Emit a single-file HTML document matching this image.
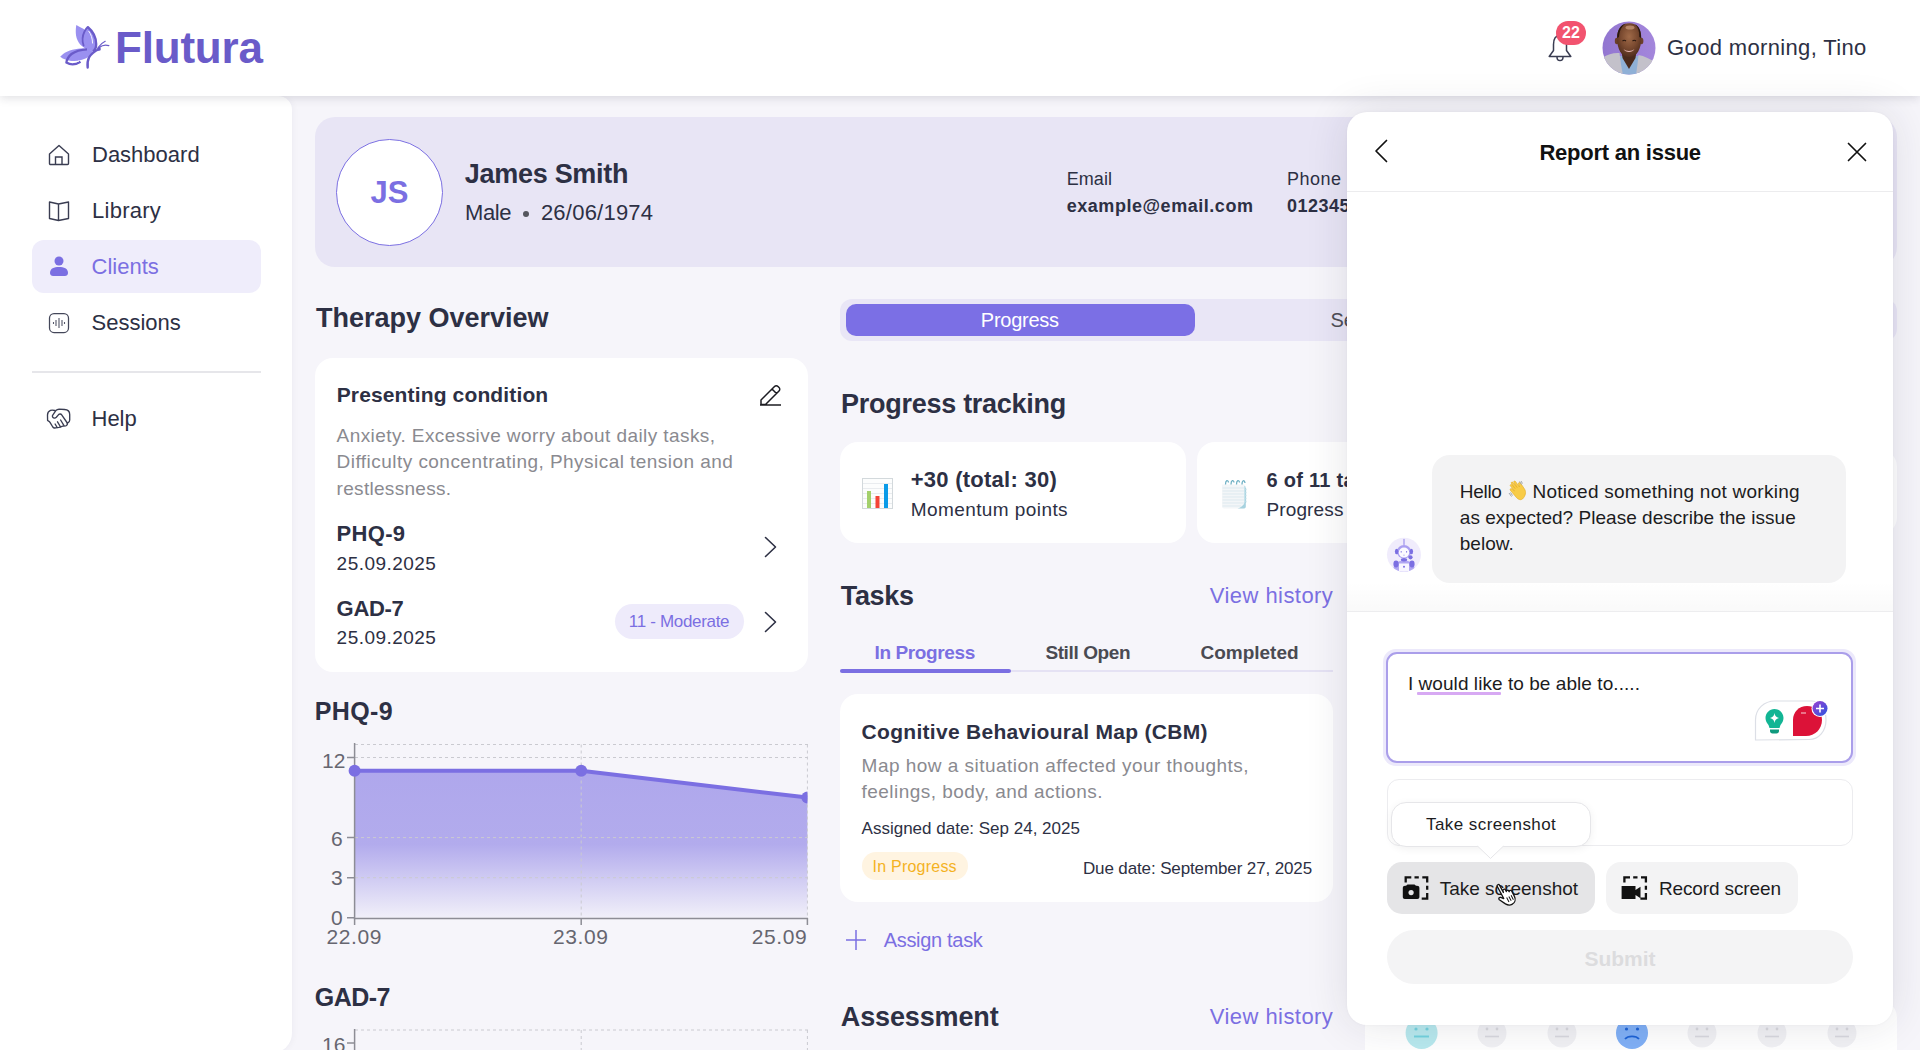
<!DOCTYPE html>
<html><head><meta charset="utf-8">
<style>
*{margin:0;padding:0;box-sizing:border-box}
html,body{width:1920px;height:1050px;overflow:hidden}
body{background:#f6f5fa;font-family:"Liberation Sans",sans-serif;color:#2d3044;position:relative}
.a{position:absolute}
.t{position:absolute;line-height:1;white-space:nowrap}
.b{font-weight:bold}
#hdr{left:0;top:0;width:1920px;height:96px;background:#fff;z-index:5;box-shadow:0 2px 9px rgba(40,40,60,.15)}
#side{left:0;top:96px;width:292px;height:957px;background:#fff;border-top-right-radius:14px;border-bottom-right-radius:20px;box-shadow:1px 0 7px rgba(30,30,60,.045);z-index:2}
.card{position:absolute;background:#fff;border-radius:18px}
.purple{color:#7b6fe2}
</style></head><body>

<!-- HEADER -->
<div id="hdr" class="a">
  <svg class="a" style="left:56px;top:20px" width="58" height="52" viewBox="56 20 58 52">
    <path d="M76.3 25 C80 27 83 28.5 85 30 L86 48.7 C80 46 76 40 75.8 33 C75.7 30 75.9 27 76.3 25 Z" fill="#9a90f0"/>
    <path d="M87.7 27 C92 31 95.5 38 95.5 44 C95.5 48 94 50 92 51 L86 49.5 C83 45 82 40 83 35 C84 31 86 29 87.7 27 Z" fill="#9a90f0"/>
    <path d="M83.6 45.5 C82 41 82.3 36 84.5 31.5 C85.5 29.5 86.5 28 87.7 27" fill="none" stroke="#6a5bc9" stroke-width="1.8" stroke-linecap="round"/><path d="M87.7 27 C92.5 31 96 37.5 96.2 44 C96.3 47.5 95 50 92.8 51.5" fill="none" stroke="#6a5bc9" stroke-width="2.3" stroke-linejoin="round"/>
    <path d="M88.6 31 C91 34 92.5 38.5 92.6 43.5" fill="none" stroke="#fff" stroke-width=".9"/>
    <path d="M60.2 56.7 C64 52.5 70 49.7 78 48.8 C82 48.5 85 48.5 87 49 L93 51 L90 56 C85 59.5 79 61 74 61 C68 61 63 59 60.2 56.7 Z" fill="#9a90f0"/>
    <path d="M87 49.3 C81 49.5 75.5 51 71.5 54 C68.5 56.5 66.8 59.5 66.4 62.6 C70 64.8 75.5 65 80.5 61.8" fill="none" stroke="#6a5bc9" stroke-width="2.3" stroke-linejoin="round"/>
    <path d="M69.5 61.3 C72.5 62.5 76 62.5 79 61" fill="none" stroke="#fff" stroke-width=".9"/>
    <path d="M99 49 C95 51 91 54 89 57.5 C87.5 60.5 87.3 64 87.7 67.5" fill="none" stroke="#6a5bc9" stroke-width="2.4" stroke-linecap="round"/>
    <circle cx="98.9" cy="48.9" r="1.9" fill="#6a5bc9"/>
    <path d="M98.3 47.3 C100.3 44.8 102.5 42.5 105.2 41.3" fill="none" stroke="#6a5bc9" stroke-width="1.2" stroke-linecap="round"/>
    <path d="M99.3 47.6 C102 45.2 105 44.4 108.8 45.6" fill="none" stroke="#6a5bc9" stroke-width="1.3" stroke-linecap="round"/>
  </svg>
  <div class="t b" style="left:115px;top:26px;font-size:44px;color:#6a5bc9;letter-spacing:-0.2px">Flutura</div>

  <!-- bell -->
  <svg class="a" style="left:1546px;top:30px" width="28" height="33" viewBox="0 0 28 33">
    <path d="M14 5.5 C9 5.5 7.5 10 7.5 14.5 L7.5 20.5 L3.2 26.5 L24.8 26.5 L20.5 20.5 L20.5 14.5 C20.5 10 19 5.5 14 5.5Z" fill="none" stroke="#3a3d52" stroke-width="1.5" stroke-linejoin="round"/>
    <path d="M11 27 C11 29.5 12.3 30.6 14 30.6 C15.7 30.6 17 29.5 17 27" fill="none" stroke="#3a3d52" stroke-width="1.5"/>
  </svg>
  <div class="a" style="left:1556px;top:21px;width:30px;height:24px;border-radius:12px;background:#f2536f"></div>
  <div class="t b" style="left:1556px;top:25px;width:30px;text-align:center;font-size:16px;color:#fff">22</div>

  <!-- avatar -->
  <svg class="a" style="left:1602px;top:21px" width="54" height="54" viewBox="0 0 54 54">
    <defs><clipPath id="cav"><circle cx="27" cy="27" r="26.5"/></clipPath>
    <linearGradient id="gbg" x1="0" y1="0" x2="1" y2="0"><stop offset="0" stop-color="#9276d0"/><stop offset="1" stop-color="#a487dc"/></linearGradient>
    <radialGradient id="gface" cx="50%" cy="40%" r="62%"><stop offset="0" stop-color="#a06a48"/><stop offset=".55" stop-color="#7a4a30"/><stop offset="1" stop-color="#4e2c1c"/></radialGradient></defs>
    <g clip-path="url(#cav)">
      <rect width="54" height="54" fill="url(#gbg)"/>
      <path d="M16 35 H38 V54 H16 Z" fill="#8fb0d6"/>
      <path d="M19.5 30 L34.5 30 L33.5 37 L27 48 L20.5 37 Z" fill="#4a2a1c"/>
      <path d="M0 37 C6 33 12 31.5 17.5 32 C18.5 40 19.5 47 21 54 L0 54 Z" fill="#c3c1ca"/>
      <path d="M36.5 34 C42 35 49 38 54 42 L54 54 L34 54 C35 47 36 40 36.5 34 Z" fill="#c3c1ca"/>
      <ellipse cx="14.8" cy="20" rx="2" ry="3.2" fill="#6b3f2a"/>
      <ellipse cx="39.4" cy="20" rx="2" ry="3.2" fill="#6b3f2a"/>
      <path d="M15 17 C15 8 20 2.2 27.5 2.2 C35 2.2 39.5 8 39.3 17 C39.3 28 35 36 27 36 C19.5 36 15 28 15 17 Z" fill="url(#gface)"/>
      <path d="M15.2 17 C15 9 19 3.5 24 2.6 C20 5 17.5 9 17 16 Z M39.1 17 C39.3 10 37 5 33 3.2 C36 6 37.5 10 37.3 16 Z" fill="#2a1810"/>
      <ellipse cx="28" cy="6.5" rx="4.5" ry="2" fill="#e0b090" opacity=".55"/>
      <path d="M20.5 20 C21.5 19.2 23 19.2 24 20 M30.5 20 C31.5 19.2 33 19.2 34 20" stroke="#2a1810" stroke-width="1.1" fill="none"/>
      <path d="M21.5 28 C24 30.5 30 30.5 32.5 28 C30.5 32 23.5 32 21.5 28 Z" fill="#e8b8b4"/>
    </g>
  </svg>
  <div class="t" style="left:1667.1px;top:37px;font-size:22px;color:#2d3044;letter-spacing:0.35px">Good morning, Tino</div>
</div>

<!-- SIDEBAR -->
<div id="side" class="a">
  <div class="a" style="left:32px;top:144px;width:229px;height:53px;border-radius:12px;background:#efedfb"></div>
  <div class="a" style="left:32px;top:275px;width:229px;height:2px;background:#e6e6ea"></div>
</div>
<div class="a" style="z-index:3;left:0;top:0">
  <!-- house -->
  <svg class="a" style="left:48px;top:144px" width="22" height="22" viewBox="0 0 22 22">
    <path d="M1.5 10 L11 1.5 L20.5 10 L20.5 19.5 C20.5 20 20 20.5 19.5 20.5 L2.5 20.5 C2 20.5 1.5 20 1.5 19.5Z" fill="none" stroke="#3a3d52" stroke-width="1.4" stroke-linejoin="round"/>
    <path d="M7.5 20.5 L7.5 13 L14 13 L14 20.5" fill="none" stroke="#3a3d52" stroke-width="1.4"/>
  </svg>
  <div class="t" style="left:92px;top:144px;font-size:22px;color:#2d3044">Dashboard</div>
  <!-- book -->
  <svg class="a" style="left:48px;top:200px" width="22" height="22" viewBox="0 0 22 22">
    <path d="M1.5 2 L10.5 4 L10.5 20.5 L1.5 18.5 Z M10.5 4 L20.5 2 L20.5 18.5 L10.5 20.5" fill="none" stroke="#3a3d52" stroke-width="1.4" stroke-linejoin="round"/>
  </svg>
  <div class="t" style="left:92px;top:200px;font-size:22px;color:#2d3044;letter-spacing:0.27px">Library</div>
  <!-- person -->
  <svg class="a" style="left:48px;top:255px" width="22" height="22" viewBox="0 0 22 22">
    <circle cx="11" cy="6" r="4.5" fill="#7b6fe2"/>
    <path d="M2 18 C2 13.5 6 12 11 12 C16 12 20 13.5 20 18 C20 20 18.5 21 17 21 L5 21 C3.5 21 2 20 2 18Z" fill="#7b6fe2"/>
  </svg>
  <div class="t" style="left:91.5px;top:256px;font-size:22px;color:#7b6fe2">Clients</div>
  <!-- sessions -->
  <svg class="a" style="left:48px;top:312px" width="22" height="22" viewBox="0 0 22 22">
    <rect x="1.5" y="1.5" width="19" height="19" rx="4.5" fill="none" stroke="#44475a" stroke-width="1.25"/>
    <path d="M5.5 10 V12 M8 8 V14 M11 6 V16 M14 8 V14 M16.5 10 V12" stroke="#55586a" stroke-width="1.1"/>
  </svg>
  <div class="t" style="left:91.5px;top:312px;font-size:22px;color:#2d3044">Sessions</div>
  <!-- help handshake -->
  <svg class="a" style="left:42px;top:402px" width="34" height="32" viewBox="42 402 34 32">
    <g fill="none" stroke="#3a3d52" stroke-width="1.35" stroke-linecap="round" stroke-linejoin="round">
      <path d="M54.8 410.5 C53 410 51.5 410 50.5 410.4 C48.5 411.3 47.5 413 47.5 415 L47.6 420.5 C48.5 421 49.5 421.5 50 422.3 L52.8 427 C53.5 428 54.5 428.2 55.5 427.9 L59 427.4 L62.8 426.2 L65.8 425.8 C67 425.4 67.6 424.2 67.3 423"/>
      <path d="M67.3 423 L68.2 422.6 C69.2 422 69.7 421 69.7 420 L69.7 414.5 C69.7 411.5 67.5 409.6 64.5 409.5 L59 409.2 C57.8 409.2 56.6 409.8 55.8 410.6 L52.6 415.3 C52.1 416.3 52.6 417.5 53.6 417.9 C54.6 418.3 55.6 418 56.3 417.3 L58.6 414.6 C59.5 413.7 61 413.8 61.7 414.8 L67.3 423"/>
      <path d="M60.6 420 L64 425.6 M57.5 421.8 L60.6 427 M55.1 424 L57.2 427.5"/>
    </g>
  </svg>
  <div class="t" style="left:91.5px;top:408px;font-size:22px;color:#2d3044">Help</div>
</div>

<!-- MAIN -->
<div id="main" class="a" style="left:0;top:0;width:1920px;height:1050px;z-index:1">
  <!-- patient card -->
  <div class="a" style="left:315px;top:117px;width:1582px;height:150px;border-radius:20px;background:#e8e5f5"></div>
  <div class="a" style="left:336px;top:139px;width:107px;height:107px;border-radius:50%;background:#fff;border:1.5px solid #7b6fe2"></div>
  <div class="t b" style="left:336px;top:177px;width:107px;text-align:center;font-size:31px;color:#7b6fe2">JS</div>
  <div class="t b" style="left:464.8px;top:161px;font-size:27px;color:#2d3044;letter-spacing:-0.29px">James Smith</div>
  <div class="t" style="left:465.0px;top:202px;font-size:22px;color:#2d3044;letter-spacing:-0.37px">Male</div>
  <div class="a" style="left:523px;top:211px;width:6px;height:6px;border-radius:50%;background:#55565e"></div>
  <div class="t" style="left:540.9px;top:202px;font-size:22px;color:#2d3044;letter-spacing:0.23px">26/06/1974</div>
  <div class="t" style="left:1066.7px;top:170px;font-size:18px;color:#2d3044;letter-spacing:0.07px">Email</div>
  <div class="t b" style="left:1066.7px;top:197px;font-size:18px;color:#2d3044;letter-spacing:0.54px">example@email.com</div>
  <div class="t" style="left:1287.0px;top:170px;font-size:18px;color:#2d3044;letter-spacing:0.50px">Phone</div>
  <div class="t b" style="left:1287.0px;top:197px;font-size:18px;color:#2d3044;letter-spacing:0.5px">0123456789</div>

  <!-- LEFT COLUMN -->
  <div class="t b" style="left:315.9px;top:305px;font-size:27px;color:#2d3044">Therapy Overview</div>
  <div class="card" style="left:315px;top:358px;width:493px;height:314px"></div>
  <div class="t b" style="left:336.7px;top:384px;font-size:21px;color:#2d3044;letter-spacing:0.14px">Presenting condition</div>
  <svg class="a" style="left:758px;top:381.5px" width="25" height="25" viewBox="0 0 25 25">
    <path d="M3 22.5 L3 18 L16.5 4.5 C17.5 3.5 19 3.5 20 4.5 L21 5.5 C22 6.5 22 8 21 9 L7.5 22.5 Z M14 7 L18.5 11.5 M2 23 L23 23" fill="none" stroke="#1c1c22" stroke-width="1.5" stroke-linejoin="round"/>
  </svg>
  <div class="t" style="left:336.6px;top:426px;font-size:19px;color:#8a8a90;letter-spacing:0.42px">Anxiety. Excessive worry about daily tasks,</div>
  <div class="t" style="left:336.6px;top:452px;font-size:19px;color:#8a8a90;letter-spacing:0.46px">Difficulty concentrating, Physical tension and</div>
  <div class="t" style="left:336.6px;top:479px;font-size:19px;color:#8a8a90;letter-spacing:0.30px">restlessness.</div>
  <div class="t b" style="left:336.6px;top:523px;font-size:22px;color:#2d3044;letter-spacing:0.32px">PHQ-9</div>
  <div class="t" style="left:336.6px;top:554px;font-size:19px;color:#2d3044;letter-spacing:0.47px">25.09.2025</div>
  <div class="t b" style="left:336.6px;top:598px;font-size:22px;color:#2d3044;letter-spacing:-0.30px">GAD-7</div>
  <div class="t" style="left:336.6px;top:628px;font-size:19px;color:#2d3044;letter-spacing:0.47px">25.09.2025</div>
  <div class="a" style="left:615px;top:604px;width:129px;height:35px;border-radius:18px;background:#eeebfb"></div>
  <div class="t" style="left:628.8px;top:613px;font-size:17px;color:#7b6fe2;letter-spacing:-0.32px">11 - Moderate</div>
  <svg class="a" style="left:760px;top:535px" width="20" height="24" viewBox="0 0 20 24">
    <path d="M5.5 2.5 L15.5 12 L5.5 21.5" fill="none" stroke="#2d3044" stroke-width="1.6" stroke-linecap="round" stroke-linejoin="round"/>
  </svg>
  <svg class="a" style="left:760px;top:610px" width="20" height="24" viewBox="0 0 20 24">
    <path d="M5.5 2.5 L15.5 12 L5.5 21.5" fill="none" stroke="#2d3044" stroke-width="1.6" stroke-linecap="round" stroke-linejoin="round"/>
  </svg>

  <div class="t b" style="left:314.8px;top:699px;font-size:25px;color:#2d3044;letter-spacing:0.38px">PHQ-9</div>
  <svg class="a" style="left:0;top:0" width="830" height="1050" viewBox="0 0 830 1050">
    <defs><linearGradient id="area" x1="0" y1="0" x2="0" y2="1">
      <stop offset="0" stop-color="#7b6fe2" stop-opacity=".58"/>
      <stop offset=".5" stop-color="#7b6fe2" stop-opacity=".55"/>
      <stop offset="1" stop-color="#7b6fe2" stop-opacity=".04"/>
    </linearGradient></defs>
    <path d="M354.6 770.8 L581.2 770.8 L807.4 797.6 L807.4 917.8 L354.6 917.8 Z" fill="url(#area)"/>
    <g stroke="#cacad0" stroke-width="1" stroke-dasharray="3 3" fill="none">
      <path d="M355 744.5 H808 M355 757.5 H808 M355 837.6 H808 M355 877.7 H808"/>
      <path d="M581.2 744.5 V918 M807.4 744.5 V918"/>
    </g>
    <path d="M354.6 743 V918.5 H808" fill="none" stroke="#8d8d95" stroke-width="1.5"/>
    <path d="M347 757.5 H354 M347 837.6 H354 M347 877.7 H354 M347 917.8 H354 M354.6 918 V925 M581.2 918 V925 M807.4 918 V925" stroke="#8d8d95" stroke-width="1.5"/>
    <path d="M354.6 770.8 L581.2 770.8 L807.4 797.6" fill="none" stroke="#7b6fe2" stroke-width="4" stroke-linejoin="round" stroke-linecap="butt"/>
    <circle cx="354.6" cy="770.8" r="6" fill="#7b6fe2"/>
    <circle cx="581.2" cy="770.8" r="6" fill="#7b6fe2"/>
    <path d="M807.4 791.6 A6 6 0 0 0 807.4 803.6 Z" fill="#7b6fe2"/>
    <g stroke="#cacad0" stroke-width="1" stroke-dasharray="3 3" fill="none">
      <path d="M355 1030 H808 M581.2 1030 V1050 M807.4 1030 V1050"/>
    </g>
    <path d="M354.6 1029 V1050 M347 1043 H354" fill="none" stroke="#8d8d95" stroke-width="1.5"/>
  </svg>
  <div class="t" style="left:322px;top:750px;font-size:21px;color:#666670">12</div>
  <div class="t" style="left:331px;top:828px;font-size:21px;color:#666670">6</div>
  <div class="t" style="left:331px;top:867px;font-size:21px;color:#666670">3</div>
  <div class="t" style="left:331px;top:907px;font-size:21px;color:#666670">0</div>
  <div class="t" style="left:326.4px;top:926px;font-size:21px;color:#666670;letter-spacing:0.6px">22.09</div>
  <div class="t" style="left:553px;top:926px;font-size:21px;color:#666670;letter-spacing:0.6px">23.09</div>
  <div class="t" style="left:751.7px;top:926px;font-size:21px;color:#666670;letter-spacing:0.6px">25.09</div>
  <div class="t b" style="left:314.8px;top:985px;font-size:25px;color:#2d3044;letter-spacing:-0.55px">GAD-7</div>
  <div class="t" style="left:322px;top:1034px;font-size:21px;color:#666670">16</div>

  <!-- MIDDLE COLUMN -->
  <div class="a" style="left:840px;top:299px;width:1057px;height:42px;border-radius:12px;background:#e9e6f6"></div>
  <div class="a" style="left:846px;top:304px;width:349px;height:32px;border-radius:10px;background:#7b6fe5"></div>
  <div class="t" style="left:980.8px;top:310px;font-size:20px;color:#ffffff;letter-spacing:-0.26px">Progress</div>
  <div class="t" style="left:1330.4px;top:310px;font-size:20px;color:#4e4e56">Sessions</div>
  <div class="t b" style="left:841.0px;top:391px;font-size:27px;color:#2d3044;letter-spacing:-0.27px">Progress tracking</div>
  <div class="card" style="left:840px;top:442px;width:346px;height:101px"></div>
  <div class="card" style="left:1197px;top:442px;width:346px;height:101px"></div>
  <div class="card" style="left:1554px;top:449px;width:343px;height:86px"></div>
  <svg class="a" style="left:862px;top:478px" width="32" height="31" viewBox="0 0 32 31">
    <rect x=".5" y=".5" width="30" height="30" fill="#fcfdfd" stroke="#d3d9dc"/>
    <path d="M1 5.5 H30 M1 10.5 H30 M1 15.5 H30 M1 20.5 H30 M1 25.5 H30" stroke="#e9ecef" stroke-width="1"/>
    <rect x="5" y="13" width="4" height="17" fill="#a3d06c"/>
    <rect x="13.5" y="18" width="4" height="12" fill="#f44336"/>
    <rect x="22" y="6" width="4" height="24" fill="#0a9be8"/>
  </svg>
  <div class="t b" style="left:910.7px;top:469px;font-size:22px;color:#2d3044;letter-spacing:0.26px">+30 (total: 30)</div>
  <div class="t" style="left:910.7px;top:500px;font-size:19px;color:#2d3044;letter-spacing:0.42px">Momentum points</div>
  <svg class="a" style="left:1221px;top:478px" width="27" height="32" viewBox="0 0 27 32">
    <path d="M1 6.5 H23.5 V30.5 H3 C2 30.5 1 29.5 1 28.5 Z" fill="#f3f6f8"/>
    <path d="M1.5 10 H23 M1.5 13 H23 M1.5 16 H23 M1.5 19 H23 M1.5 22 H23 M1.5 25 H23 M1.5 28 H20" stroke="#dde9ef" stroke-width="1"/>
    <path d="M23 7.5 C24.5 8 25 9 25 10 V28.5 C25 29.7 24 30.5 23 30.5 Z" fill="#c6e3ec"/>
    <path d="M24.5 10 L25 11.5 L24.5 13 L25 14.5 L24.5 16 L25 17.5 L24.5 19 L25 20.5 L24.5 22 L25 23.5 L24.5 25" fill="none" stroke="#9ccbda" stroke-width=".7"/>
    <path d="M16.5 30.5 C19.5 30 22.5 27.5 24.5 23.5 L24.5 28.5 C24.5 29.7 23.7 30.5 22.5 30.5 Z" fill="#a7d2df"/>
    <path d="M4.5 6.5 C4.5 2 7 1.5 7.5 4.5 M10 6.5 C10 2 12.5 1.5 13 4.5 M15.5 6.5 C15.5 2 18 1.5 18.5 4.5 M21 6.5 C21 2 23.5 1.5 24 5" stroke="#6fb0c4" stroke-width="1.3" fill="none"/>
  </svg>
  <div class="t b" style="left:1266.4px;top:470px;font-size:20px;color:#2d3044;letter-spacing:0.3px">6 of 11 tasks</div>
  <div class="t" style="left:1266.4px;top:500px;font-size:19px;color:#2d3044;letter-spacing:0.14px">Progress</div>

  <div class="t b" style="left:840.8px;top:583px;font-size:27px;color:#2d3044;letter-spacing:-0.35px">Tasks</div>
  <div class="t" style="left:1209.8px;top:585px;font-size:22px;color:#7b6fe2;letter-spacing:0.44px">View history</div>
  <div class="t b" style="left:874.5px;top:643px;font-size:19px;color:#7b6fe2;letter-spacing:-0.38px">In Progress</div>
  <div class="t b" style="left:1045.4px;top:643px;font-size:19px;color:#4a4a52;letter-spacing:-0.39px">Still Open</div>
  <div class="t b" style="left:1200.6px;top:643px;font-size:19px;color:#4a4a52;letter-spacing:-0.03px">Completed</div>
  <div class="a" style="left:840px;top:670px;width:493px;height:2px;background:#e5e2f4"></div>
  <div class="a" style="left:840px;top:669px;width:171px;height:4px;border-radius:2px;background:#7b6fe2"></div>
  <div class="card" style="left:840px;top:694px;width:493px;height:208px"></div>
  <div class="t b" style="left:861.6px;top:721px;font-size:21px;color:#2d3044;letter-spacing:0.29px">Cognitive Behavioural Map (CBM)</div>
  <div class="t" style="left:861.6px;top:756px;font-size:19px;color:#8a8a90;letter-spacing:0.47px">Map how a situation affected your thoughts,</div>
  <div class="t" style="left:861.6px;top:782px;font-size:19px;color:#8a8a90;letter-spacing:0.45px">feelings, body, and actions.</div>
  <div class="t" style="left:861.6px;top:820px;font-size:17px;color:#2d3044">Assigned date: Sep 24, 2025</div>
  <div class="a" style="left:861.6px;top:852px;width:106px;height:28px;border-radius:14px;background:#fff4e1"></div>
  <div class="t" style="left:872.6px;top:859px;font-size:16px;color:#f4b21f;letter-spacing:0.22px">In Progress</div>
  <div class="t" style="left:1082.9px;top:860px;font-size:17px;color:#2d3044;letter-spacing:-0.12px">Due date: September 27, 2025</div>
  <svg class="a" style="left:845px;top:929px" width="22" height="22" viewBox="0 0 22 22">
    <path d="M11 1 V21 M1 11 H21" stroke="#7b6fe2" stroke-width="1.5"/>
  </svg>
  <div class="t" style="left:883.7px;top:930px;font-size:20px;color:#7b6fe2;letter-spacing:-0.31px">Assign task</div>
  <div class="t b" style="left:840.8px;top:1004px;font-size:27px;color:#2d3044;letter-spacing:-0.13px">Assessment</div>
  <div class="t" style="left:1209.8px;top:1006px;font-size:22px;color:#7b6fe2;letter-spacing:0.44px">View history</div>

  <!-- RIGHT COLUMN (behind panel) -->
  <div class="card" style="left:1365px;top:1000px;width:532px;height:80px"></div>
</div>

<!-- PANEL -->
<div id="panel" class="a" style="left:1347px;top:112px;width:546px;height:913px;background:#fff;border-radius:20px;box-shadow:0 0 44px rgba(30,30,60,.12),0 0 3px rgba(0,0,0,.04);z-index:10;overflow:hidden">
  <svg class="a" style="left:24px;top:26px" width="20" height="26" viewBox="0 0 20 26">
    <path d="M15.5 2.5 L5 13 L15.5 23.5" fill="none" stroke="#111" stroke-width="1.7" stroke-linecap="round" stroke-linejoin="round"/>
  </svg>
  <svg class="a" style="left:498px;top:28px" width="24" height="24" viewBox="0 0 24 24">
    <path d="M3.5 3.5 L20.5 20.5 M20.5 3.5 L3.5 20.5" fill="none" stroke="#111" stroke-width="1.7" stroke-linecap="round"/>
  </svg>
  <div class="a" style="left:0;top:79px;width:546px;height:1px;background:#ececee"></div>
  <div class="a" style="left:0;top:470px;width:546px;height:30px;background:linear-gradient(to bottom,rgba(0,0,0,0),rgba(0,0,0,.025))"></div>
  <div class="a" style="left:0;top:499px;width:546px;height:1px;background:#ededef"></div>
</div>
<div class="a" style="left:0;top:0;z-index:11">
  <div class="t b" style="left:1539.4px;top:142px;font-size:22px;color:#111111;letter-spacing:-0.24px">Report an issue</div>
  <!-- robot -->
  <svg class="a" style="left:1386px;top:537px" width="36" height="36" viewBox="1386 537 36 36">
    <defs><clipPath id="rbc"><circle cx="1404" cy="554.8" r="17"/></clipPath></defs>
    <circle cx="1404" cy="554.8" r="17" fill="#f0ecfc"/>
    <g clip-path="url(#rbc)">
    <path d="M1404 539.5 V544.5" stroke="#aea4f0" stroke-width="1.5" stroke-linecap="round"/>
    <ellipse cx="1404" cy="551.8" rx="7.2" ry="6.8" fill="#aa9ff1"/>
    <ellipse cx="1404" cy="552.6" rx="5.2" ry="5" fill="#fbfaff"/>
    <ellipse cx="1396.6" cy="551.5" rx="1.7" ry="2.7" fill="#7b6fe2"/>
    <ellipse cx="1411.4" cy="551.5" rx="1.7" ry="2.7" fill="#7b6fe2"/>
    <path d="M1401.2 551 V552.6 M1406.6 551 V552.6" stroke="#8a7fe6" stroke-width="1"/>
    <path d="M1403 554.8 C1403.6 555.5 1404.4 555.5 1405 554.8" stroke="#b8aef2" stroke-width=".8" fill="none"/>
    <circle cx="1410.5" cy="557.3" r="2.1" fill="#7b6fe2"/>
    <path d="M1393 572 C1393 564 1397 560.5 1404 560.5 C1411 560.5 1415 564 1415 572 Z" fill="#b1a7f2"/>
    <ellipse cx="1404" cy="559.8" rx="3.2" ry="1.7" fill="#7b6fe2"/>
    <path d="M1399 572 V563.5 H1409 V572 Z" fill="#f8f6ff"/>
    <circle cx="1404" cy="566.8" r="1" fill="#7b6fe2"/>
    <ellipse cx="1396" cy="564" rx="2.6" ry="3.4" fill="#7b6fe2"/>
    <ellipse cx="1412" cy="564" rx="2.6" ry="3.4" fill="#7b6fe2"/>
    </g>
  </svg>
  <div class="a" style="left:1432px;top:455px;width:414px;height:128px;border-radius:18px;background:#f3f3f4"></div>
  <div class="t" style="left:1459.8px;top:482px;font-size:19px;color:#1c1c1e;letter-spacing:-0.30px">Hello</div>
  <svg class="a" style="left:1507px;top:479px" width="22" height="22" viewBox="0 0 22 22">
    <g transform="translate(22 0) scale(-1 1) translate(0.5 0)">
    <path d="M6 20 C3 17 2 13 4 10 L8 4 C9 3 10.5 3.5 10 5 L9 8 L13 2.5 C14 1.5 15.5 2.5 14.5 3.5 L11.5 8.5 L15.5 3.5 C16.5 2.5 18 3.5 17 4.5 L13.5 9.5 L16.5 6 C17.5 5 19 6 18 7 L14 12 L16.5 10 C17.5 9 19 10 18 11.5 L12.5 18 C10.5 20.5 8 21.5 6 20Z" fill="#f8cc48" stroke="#e2aa22" stroke-width=".6"/>
    </g>
    <path d="M12.5 2.5 L14.5 5.5 M14 2 L15.5 4.5" stroke="#a0a6ae" stroke-width="1"/>
    <path d="M2 14 L4.5 17.5 M3.5 13.5 L5.5 16.5" stroke="#a0a6ae" stroke-width="1"/>
  </svg>
  <div class="t" style="left:1532.5px;top:482px;font-size:19px;color:#1c1c1e;letter-spacing:0.26px">Noticed something not working</div>
  <div class="t" style="left:1459.8px;top:508px;font-size:19px;color:#1c1c1e;letter-spacing:0.03px">as expected? Please describe the issue</div>
  <div class="t" style="left:1459.8px;top:534px;font-size:19px;color:#1c1c1e">below.</div>

  <!-- textarea -->
  <div class="a" style="left:1383px;top:648.5px;width:473px;height:117px;border-radius:13px;background:#ece9fb"></div>
  <div class="a" style="left:1386px;top:651.5px;width:467px;height:111px;border-radius:11px;background:#fff;border:2px solid #aa9eea"></div>
  <div class="t" style="left:1407.9px;top:674px;font-size:19px;color:#1c1c1e;letter-spacing:0.06px">I would like to be able to.....</div>
  <div class="a" style="left:1417px;top:692px;width:84px;height:3px;border-radius:1px;background:#d7a9f3"></div>
  <!-- grammarly -->
  <svg class="a" style="left:1754px;top:698px" width="78" height="44" viewBox="0 0 78 44">
    <path d="M1.5 42 V22 C1.5 11 10 3 21 3 H58 C68 3 72 12 72 22 C72 33 65 41.5 55 41.5 Z" fill="#fff" stroke="#dcdfe6" stroke-width="1.2"/>
    <path d="M20.5 11 C15.5 11 11.5 15 11.5 20 C11.5 23 13 25 14.5 27 L15.5 30 H25.5 L26.5 27 C28 25 29.5 23 29.5 20 C29.5 15 25.5 11 20.5 11Z" fill="#12b594"/>
    <path d="M16 31.5 H25 V33 C25 34.5 24 35.5 22.5 35.5 H18.5 C17 35.5 16 34.5 16 33Z" fill="#0f9a7e"/>
    <path d="M20.5 15 C21 18 22 19 25 20 C22 21 21 22 20.5 25 C20 22 19 21 16 20 C19 19 20 18 20.5 15Z" fill="#fff"/>
    <path d="M39 38 V22 C39 14 45 8 53 8 C61 8 68 14 68 22 C68 31 61 38 52 38Z" fill="#dc1238"/>
    <path d="M47 15 H52" stroke="#f3b3bf" stroke-width="1.2"/>
    <circle cx="66" cy="10.5" r="8.5" fill="#fff"/>
    <defs><linearGradient id="gplus" x1="0" y1="0" x2="1" y2="1"><stop offset="0" stop-color="#9b3fd0"/><stop offset="1" stop-color="#2a56e0"/></linearGradient></defs>
    <circle cx="66" cy="10.5" r="7.5" fill="url(#gplus)"/>
    <path d="M66 6.5 V14.5 M62 10.5 H70" stroke="#fff" stroke-width="1.6"/>
  </svg>

  <!-- box2 -->
  <div class="a" style="left:1387px;top:779px;width:466px;height:67px;border-radius:12px;border:1px solid #ececef;background:#fff"></div>
  <!-- tooltip -->
  <div class="a" style="left:1390.5px;top:801.5px;width:200.5px;height:45px;border-radius:15px;background:#fff;border:1px solid #e6e6e9;box-shadow:0 2px 8px rgba(0,0,0,.06)"></div>
  <svg class="a" style="left:1475px;top:845px" width="32" height="15" viewBox="0 0 32 15">
    <path d="M2 0.5 L15.5 13.5 L29 0.5" fill="#fff" stroke="#e6e6e9" stroke-width="1"/>
    <rect x="0" y="-2" width="32" height="2.6" fill="#fff"/>
  </svg>
  <div class="t" style="left:1426.0px;top:816px;font-size:17px;color:#1c1c1e;letter-spacing:0.43px">Take screenshot</div>

  <!-- buttons -->
  <div class="a" style="left:1387px;top:862px;width:208px;height:52px;border-radius:15px;background:#e5e5e7"></div>
  <svg class="a" style="left:1400px;top:874px" width="32" height="28" viewBox="1400 874 32 28">
    <path d="M1405.7 882.6 V877.4 H1411.3 M1414.5 877.4 H1418.8 M1422.3 877.4 H1427.2 V882.6 M1427.2 885.8 V889.7 M1427.2 893 V898.6 H1421.7" fill="none" stroke="#111" stroke-width="2.3"/>
    <path d="M1402.8 888 C1402.8 886.5 1403.8 885.8 1405 885.8 H1406 L1407.5 884.5 H1414.5 L1416 885.8 H1417 C1418.5 885.8 1419.4 886.6 1419.4 888 V897 C1419.4 898.2 1418.6 899 1417.4 899 H1404.8 C1403.6 899 1402.8 898.2 1402.8 897 Z" fill="#111"/>
    <circle cx="1411.1" cy="892.6" r="2.6" fill="#e5e5e7"/>
  </svg>
  <div class="t" style="left:1439.7px;top:879px;font-size:19px;color:#1c1c1e">Take screenshot</div>
  <div class="a" style="left:1606px;top:862px;width:192px;height:52px;border-radius:15px;background:#f3f3f4"></div>
  <svg class="a" style="left:1619px;top:874px" width="32" height="28" viewBox="1619 874 32 28">
    <path d="M1624.4 882.6 V877.4 H1630 M1633.2 877.4 H1637.5 M1641 877.4 H1645.9 V882.6 M1645.9 885.8 V889.7 M1645.9 893 V898.6 H1640.4" fill="none" stroke="#111" stroke-width="2.3"/>
    <path d="M1621.6 886 H1635.5 V899 H1621.6 Z M1635.5 890 L1640.5 886.8 V898.2 L1635.5 895 Z" fill="#111"/>
  </svg>
  <div class="t" style="left:1658.9px;top:879px;font-size:19px;color:#1c1c1e;letter-spacing:-0.12px">Record screen</div>
  <!-- cursor -->
  <svg class="a" style="left:1494px;top:880px" width="26" height="28" viewBox="0 0 22 28">
    <g transform="rotate(-28 11 14)">
    <path d="M6 2.5 C6 1.2 8.5 1.2 8.5 2.5 V11 L9 9 C9.5 8 11.5 8 11.5 9.5 V11.5 C12 10.5 14 10.5 14 12 V13 C14.5 12 16.5 12 16.5 13.5 V19 C16.5 23 14 25.5 10.5 25.5 C8 25.5 6.5 24.5 5 22 L1.5 15.5 C1 14 2.5 13 3.8 14 L6 16.5 Z" fill="#fff" stroke="#111" stroke-width="1.3" stroke-linejoin="round"/>
    <path d="M9 17 V22 M11.5 17 V22 M14 17 V22" stroke="#111" stroke-width="1"/>
    </g>
  </svg>
  <!-- submit -->
  <div class="a" style="left:1387px;top:930px;width:466px;height:54px;border-radius:27px;background:#f4f4f5"></div>
  <div class="t b" style="left:1387px;top:948px;width:466px;text-align:center;font-size:21px;color:#dcdcde">Submit</div>
</div>

<!-- faces row (behind panel) -->
<div class="a" style="left:0;top:0;z-index:4">
  <svg class="a" style="left:1365px;top:1010px" width="540" height="40" viewBox="1365 1010 540 40">
    <circle cx="1421.6" cy="1033" r="16" fill="#b8e9ee"/>
    <circle cx="1416" cy="1029" r="1.6" fill="#74d2de"/><circle cx="1427" cy="1029" r="1.6" fill="#74d2de"/>
    <path d="M1414 1036.5 H1429" stroke="#74d2de" stroke-width="2"/>
    <circle cx="1492" cy="1033" r="14.5" fill="#f1f1f4"/><circle cx="1487" cy="1029" r="1.4" fill="#d8d8de"/><circle cx="1497" cy="1029" r="1.4" fill="#d8d8de"/><path d="M1485 1036.5 H1499" stroke="#d8d8de" stroke-width="1.6"/>
    <circle cx="1562" cy="1033" r="14.5" fill="#f1f1f4"/><circle cx="1557" cy="1029" r="1.4" fill="#d8d8de"/><circle cx="1567" cy="1029" r="1.4" fill="#d8d8de"/><path d="M1555 1036.5 H1569" stroke="#d8d8de" stroke-width="1.6"/>
    <circle cx="1702" cy="1033" r="14.5" fill="#f1f1f4"/><circle cx="1697" cy="1029" r="1.4" fill="#d8d8de"/><circle cx="1707" cy="1029" r="1.4" fill="#d8d8de"/><path d="M1695 1036.5 H1709" stroke="#d8d8de" stroke-width="1.6"/>
    <circle cx="1772" cy="1033" r="14.5" fill="#f1f1f4"/><circle cx="1767" cy="1029" r="1.4" fill="#d8d8de"/><circle cx="1777" cy="1029" r="1.4" fill="#d8d8de"/><path d="M1765 1036.5 H1779" stroke="#d8d8de" stroke-width="1.6"/>
    <circle cx="1842" cy="1033" r="14.5" fill="#f1f1f4"/><circle cx="1837" cy="1029" r="1.4" fill="#d8d8de"/><circle cx="1847" cy="1029" r="1.4" fill="#d8d8de"/><path d="M1835 1036.5 H1849" stroke="#d8d8de" stroke-width="1.6"/>
    <circle cx="1632" cy="1033" r="16" fill="#80b0f6"/>
    <circle cx="1626.5" cy="1029" r="1.6" fill="#1d63d6"/><circle cx="1637.5" cy="1029" r="1.6" fill="#1d63d6"/>
    <path d="M1625 1039 C1628 1035.5 1636 1035.5 1639 1039" stroke="#1d63d6" stroke-width="1.8" fill="none"/>
  </svg>
</div>
</body></html>
